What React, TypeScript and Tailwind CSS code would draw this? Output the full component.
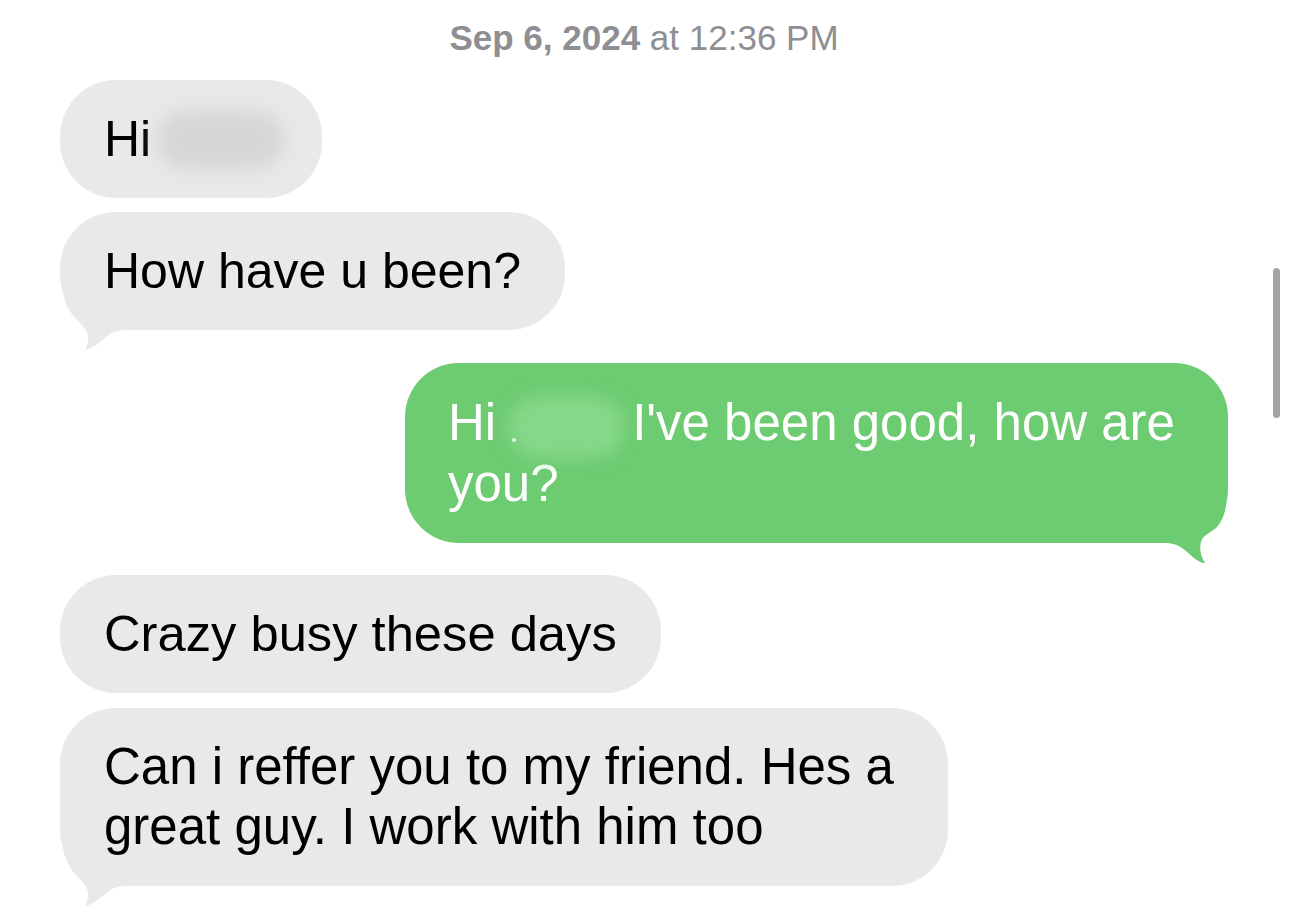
import React from "react";

const font = "font-['Liberation_Sans',Arial,sans-serif]";

function GrayTail() {
  return (
    <svg className="absolute left-0 bottom-[-24px] w-[80px] h-[74px]" viewBox="0 0 80 74">
      <path
        d="M2 0 C2 20 9 32 17 40 C23 46 28 51 28 58 C28 63 27 67 25 70 C33 69 40 62 46 57 C52 52 58 50 68 50 L68 0 Z"
        fill="#e9e9eb"
      />
    </svg>
  );
}

function GreenTail() {
  return (
    <svg className="absolute right-0 bottom-[-24px] w-[80px] h-[74px]" viewBox="0 0 80 74">
      <path
        d="M79 0 C79 16 75 28 68 35 C62 40 55 42 53 49 C51 56 53 64 57 70 C50 70 44 63 38 58 C32 53 28 51 20 50 L20 0 Z"
        fill="#6dcb71"
      />
    </svg>
  );
}

function Gray({ children, tail, className }: { children: React.ReactNode; tail?: boolean; className?: string }) {
  return (
    <div className={"relative self-start rounded-[56px] bg-[#e9e9eb] px-[44px] py-[29px] leading-[60px] text-black " + (className ?? "")}>
      {tail && <GrayTail />}
      <div className="relative z-10">{children}</div>
    </div>
  );
}

export default function App() {
  return (
    <div className={"w-[1290px] h-[912px] overflow-hidden bg-white relative " + font}>
      <div className="flex flex-col pl-[60px] pr-[62px] pt-[18px]">
        <div className="text-center text-[35px] leading-[40px] text-[#8e8e93] mb-[22px]">
          <span className="font-semibold">Sep 6, 2024</span> at 12:36 PM
        </div>

        <Gray className="w-[262px] text-[50px]">
          <span className="relative inline-flex items-center">
            Hi
            <span className="ml-[4px] inline-block w-[130px] h-[60px] relative">
              <span className="absolute left-[2px] top-[2px] w-[128px] h-[58px] rounded-full bg-[#d6d6d6] blur-[9px]"></span>
            </span>
          </span>
        </Gray>

        <div className="h-[14px]" />
        <Gray tail className="text-[50px]">How have u been?</Gray>

        <div className="h-[33px]" />
        <div className="relative self-end w-[823px] rounded-[54px] bg-[#6dcb71] pl-[43px] pr-[20px] py-[29px] text-[51px] leading-[61px] text-white">
          <GreenTail />
          <div className="relative z-10">
            Hi
            <span className="relative inline-block w-[136px] h-[50px] align-middle">
              <span className="absolute left-[12px] top-[-6px] w-[116px] h-[62px] rounded-full bg-[#86d889] blur-[9px]"></span>
              <span className="absolute left-[16px] top-[36px] w-[4px] h-[4px] rounded-full bg-[#e8f8e8]"></span>
            </span>
            I've been good, how are
            <br />
            you?
          </div>
        </div>

        <div className="h-[32px]" />
        <Gray className="text-[50.7px]">Crazy busy these days</Gray>

        <div className="h-[15px]" />
        <Gray tail className="w-[888px] text-[51px]">
          Can i reffer you to my friend. Hes a
          <br />
          great guy. I work with him too
        </Gray>
      </div>

      <div className="absolute left-[1273px] top-[268px] w-[7px] h-[150px] rounded-full bg-[#a3a3a3]" />
    </div>
  );
}
